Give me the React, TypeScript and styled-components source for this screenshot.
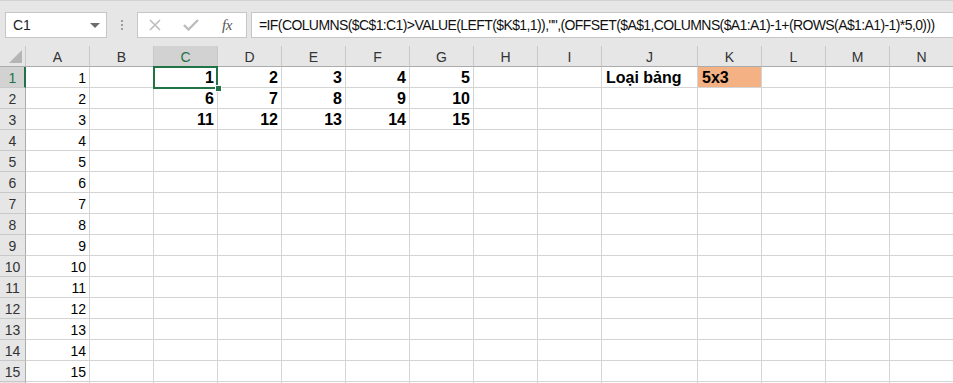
import React from "react";
import styled, { createGlobalStyle, css } from "styled-components";

const Global = createGlobalStyle`
  html, body { margin: 0; padding: 0; background: #ffffff; overflow: hidden; }
  #root { width: 953px; height: 383px; overflow: hidden; }
`;

const UI = `"Liberation Sans", Arial, sans-serif`;

const Page = styled.div`
  width: 953px;
  height: 383px;
  display: flex;
  flex-direction: column;
  overflow: hidden;
  font-family: ${UI};
`;

const FormulaBar = styled.div`
  height: 46px;
  box-sizing: border-box;
  background: #e6e6e6;
  border-top: 1px solid #d2d2d2;
  display: flex;
  align-items: flex-start;
  padding: 11px 0 0 5px;
  flex-shrink: 0;
`;

const NameBox = styled.div`
  width: 102px;
  height: 26px;
  box-sizing: border-box;
  background: #fff;
  border: 1px solid #c6c6c6;
  display: flex;
  align-items: center;
  justify-content: space-between;
  padding: 0 6px 0 7px;
  font-size: 14px;
  color: #222;
`;

const Caret = styled.span`
  width: 0;
  height: 0;
  border-left: 5px solid transparent;
  border-right: 5px solid transparent;
  border-top: 5px solid #6d6d6d;
`;

const Grip = styled.div`
  width: 30px;
  height: 26px;
  display: flex;
  flex-direction: column;
  align-items: center;
  justify-content: center;
  gap: 2px;
  span {
    width: 2px;
    height: 2px;
    background: #9c9c9c;
  }
`;

const IconBox = styled.div`
  width: 110px;
  height: 26px;
  box-sizing: border-box;
  background: #fff;
  border: 1px solid #c6c6c6;
  display: flex;
  align-items: center;
  padding-left: 10px;
  gap: 16px;
`;

const Fx = styled.span`
  font-family: "Liberation Serif", "DejaVu Serif", serif;
  font-style: italic;
  font-size: 15px;
  color: #555;
  margin-left: 6px;
  letter-spacing: -0.5px;
`;

const FormulaInput = styled.div`
  flex: 1;
  height: 26px;
  margin-left: 4px;
  box-sizing: border-box;
  background: #fff;
  border: 1px solid #c6c6c6;
  border-right: none;
  display: flex;
  align-items: center;
  padding-left: 7px;
  font-size: 14px;
  letter-spacing: -0.6px;
  color: #111;
  white-space: nowrap;
  overflow: hidden;
`;

const SheetWrap = styled.div`
  position: relative;
  flex: 1;
`;

const Sheet = styled.div`
  display: grid;
  grid-template-columns: 26px repeat(9, 64px) 96px repeat(4, 64px);
  grid-template-rows: 21px;
  grid-auto-rows: 21px;
`;

const Corner = styled.div`
  background: #e6e6e6;
  border-right: 1px solid #c8c8c8;
  border-bottom: 1px solid #ababab;
  box-sizing: border-box;
  position: relative;
  &::after {
    content: "";
    position: absolute;
    right: 3px;
    bottom: 3px;
    width: 0;
    height: 0;
    border-left: 13px solid transparent;
    border-bottom: 13px solid #b5b5b5;
  }
`;

const ColHead = styled.div<{ $sel?: boolean }>`
  box-sizing: border-box;
  background: ${(p) => (p.$sel ? "#d2d2d2" : "#e6e6e6")};
  border-right: 1px solid #c8c8c8;
  border-bottom: 1px solid #ababab;
  display: flex;
  align-items: center;
  justify-content: center;
  font-size: 14px;
  color: ${(p) => (p.$sel ? "#217346" : "#333")};
  padding-top: 2px;
`;

const RowHead = styled.div<{ $sel?: boolean }>`
  box-sizing: border-box;
  background: ${(p) => (p.$sel ? "#d2d2d2" : "#e6e6e6")};
  border-bottom: 1px solid #c8c8c8;
  border-right: ${(p) => (p.$sel ? "2px solid #217346" : "1px solid #ababab")};
  display: flex;
  align-items: center;
  justify-content: center;
  font-size: 14px;
  color: ${(p) => (p.$sel ? "#217346" : "#333")};
  padding-top: 1px;
  ${(p) => p.$sel && css`padding-left: 1px;`}
`;

const Cell = styled.div<{ $bold?: boolean; $fill?: string; $align?: "left" | "right" }>`
  box-sizing: border-box;
  border-right: 1px solid #d4d4d4;
  border-bottom: 1px solid #d4d4d4;
  background: ${(p) => p.$fill || "#fff"};
  display: flex;
  align-items: center;
  justify-content: ${(p) => (p.$align === "left" ? "flex-start" : "flex-end")};
  padding: 1px 3px 0 4px;
  color: #000;
  white-space: nowrap;
  font-size: ${(p) => (p.$bold ? "16px" : "14px")};
  font-weight: ${(p) => (p.$bold ? 700 : 400)};
`;

const Selection = styled.div`
  position: absolute;
  left: 153px;
  top: 20px;
  width: 65px;
  height: 23px;
  box-sizing: border-box;
  border: 2px solid #217346;
  pointer-events: none;
`;

const Handle = styled.div`
  position: absolute;
  left: 215px;
  top: 39px;
  width: 7px;
  height: 7px;
  box-sizing: border-box;
  background: #217346;
  border: 1px solid #fff;
`;

const cols = ["A", "B", "C", "D", "E", "F", "G", "H", "I", "J", "K", "L", "M", "N"];

const data: Record<string, { v: string; bold?: boolean; fill?: string; align?: "left" | "right" }> = {
  C1: { v: "1", bold: true }, D1: { v: "2", bold: true }, E1: { v: "3", bold: true }, F1: { v: "4", bold: true }, G1: { v: "5", bold: true },
  C2: { v: "6", bold: true }, D2: { v: "7", bold: true }, E2: { v: "8", bold: true }, F2: { v: "9", bold: true }, G2: { v: "10", bold: true },
  C3: { v: "11", bold: true }, D3: { v: "12", bold: true }, E3: { v: "13", bold: true }, F3: { v: "14", bold: true }, G3: { v: "15", bold: true },
  J1: { v: "Loại bảng", bold: true, align: "left" },
  K1: { v: "5x3", bold: true, align: "left", fill: "#f4b183" },
};

const formula =
  '=IF(COLUMNS($C$1:C1)>VALUE(LEFT($K$1,1)),"",(OFFSET($A$1,COLUMNS($A1:A1)-1+(ROWS(A$1:A1)-1)*5,0)))';

export default function App() {
  const rows = Array.from({ length: 16 }, (_, i) => i + 1);
  return (
    <Page>
      <Global />
      <FormulaBar>
        <NameBox>
          <span>C1</span>
          <Caret />
        </NameBox>
        <Grip>
          <span />
          <span />
          <span />
        </Grip>
        <IconBox>
          <svg width="14" height="14" viewBox="0 0 14 14">
            <path d="M2 2 L12 12 M12 2 L2 12" stroke="#bdbdbd" strokeWidth="1.6" fill="none" />
          </svg>
          <svg width="18" height="14" viewBox="0 0 18 14" style={{ marginLeft: 4 }}>
            <path d="M2 7 L6.5 11.5 L16 2" stroke="#bdbdbd" strokeWidth="2.4" fill="none" />
          </svg>
          <Fx>fx</Fx>
        </IconBox>
        <FormulaInput>{formula}</FormulaInput>
      </FormulaBar>
      <SheetWrap>
        <Sheet>
          <Corner />
          {cols.map((c) => (
            <ColHead key={c} $sel={c === "C"}>
              {c}
            </ColHead>
          ))}
          {rows.map((r) => (
            <React.Fragment key={r}>
              <RowHead $sel={r === 1}>{r <= 15 ? r : ""}</RowHead>
              {cols.map((c) => {
                const id = c + r;
                const d = data[id];
                if (c === "A" && r <= 15) {
                  return <Cell key={id}>{r}</Cell>;
                }
                return (
                  <Cell key={id} $bold={d?.bold} $fill={d?.fill} $align={d?.align}>
                    {d?.v}
                  </Cell>
                );
              })}
            </React.Fragment>
          ))}
        </Sheet>
        <Selection />
        <Handle />
      </SheetWrap>
    </Page>
  );
}
